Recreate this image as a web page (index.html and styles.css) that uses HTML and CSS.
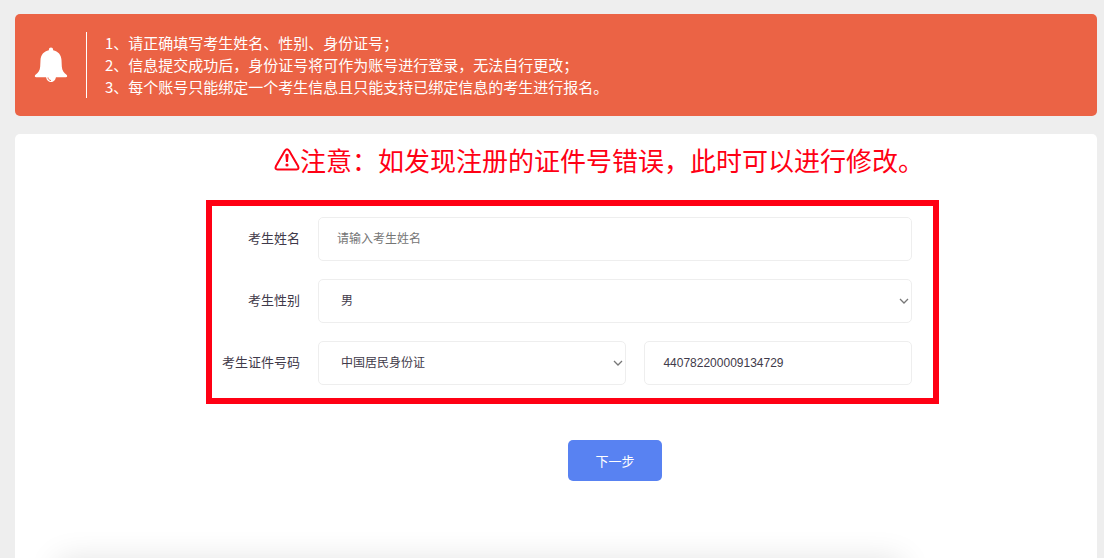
FILE: index.html
```html
<!doctype html>
<html lang="zh-CN">
<head>
<meta charset="utf-8">
<meta name="viewport" content="width=device-width, initial-scale=1">
<title>考生信息</title>
	<link rel="stylesheet" href="styles.css">
</head>

<body>
	<div class="notice">
		<div class="notice-icon">
			<svg width="34" height="36" viewBox="0 0 34 36" aria-hidden="true">
				<path fill="#fff" d="M17 0.5c1.2 0 2.1 0.9 2.1 2.1v0.6c5 1 8.2 4.7 8.4 9.8l0.3 6.500c0.2 4 2.2 6.3 4.7 8.2 1.1 0.9 0.8 2.6-0.7 2.6H2.2c-1.5 0-1.8-1.7-0.7-2.6 2.5-1.9 4.5-4.2 4.700-8.200l0.300-6.500c0.200-5.100 3.400-8.800 8.400-9.800v-0.600c0-1.200 0.900-2.100 2.100-2.100z"/>
				<path fill="#fff" d="M12 29h10c0 3.400-2 6-5 6s-5-2.600-5-6z"/>
				<path fill="none" stroke="#eb6345" d="M14 30.500c0.200 1.800 1.200 2.800 3 3"/>
			</svg>
		</div>
		<ul class="notice-list">
			<li>1、请正确填写考生姓名、性别、身份证号；</li>
			<li>2、信息提交成功后，身份证号将可作为账号进行登录，无法自行更改；</li>
			<li>3、每个账号只能绑定一个考生信息且只能支持已绑定信息的考生进行报名。</li>
		</ul>
	</div>

	<div class="card">
		<form class="form">
			<h2 class="warning">
				<svg width="26" height="24" viewBox="0 0 26 24" aria-hidden="true">
					<path fill="none" stroke="#ff0014" stroke-width="2" stroke-linejoin="round" d="M11 2.500Q13 0 15 2.500L24 18Q25.500 21.500 22.500 21.500H3.500Q0.500 21.500 2 18z"/>
					<path fill="#ff0014" d="M11.300 6.500Q13 5 14.700 6.500L14 14h-2z"/>
					<circle fill="#ff0014" cx="13" cy="17" r="1.600"/>
				</svg>
				<span>注意：如发现注册的证件号错误，此时可以进行修改。</span>
			</h2>
			<div class="fields">
				<div class="row">
					<label for="name">考生姓名</label>
					<input type="text" id="name" placeholder="请输入考生姓名">
				</div>
				<div class="row">
					<label for="gender">考生性别</label>
					<select id="gender">
						<option>男</option>
						<option>女</option>
					</select>
				</div>
				<div class="row">
					<label for="card_no">考生证件号码</label>
					<div class="group">
						<select id="card_type" aria-label="证件类型">
							<option>中国居民身份证</option>
						</select>
						<input type="text" id="card_no" value="440782200009134729">
					</div>
				</div>
			</div>
			<div class="actions">
				<button type="submit">下一步</button>
			</div>
		</form>
	</div>
</body>
</html>
```
FILE: styles.css
```css
*{box-sizing: border-box;}
body{
	background-color: #eee;
	color: #3f3a4a;
	font-family: "Liberation Sans","Noto Sans CJK SC",sans-serif;
	display: flex;
	flex-direction: column;
	gap: 18px;
	min-height: 100vh;
	margin: 0;
	padding: 14px 7px 0 15px;
}
.notice{
	background-color: #eb6345;
	border-radius: 5px;
	color: #fff;
	display: flex;
	padding: 18px 0;
}
.notice-icon{
	border-right: 1px solid #fff;
	width: 72px;
	display: flex;
	align-items: center;
	justify-content: center;
}
.notice-list{
	font-family: "Noto Sans CJK SC",sans-serif;
	font-size: 15px;
	line-height: 22px;
	list-style-type: none;
	margin: 0;
	padding: 0 18px;
}
.card{
	background-color: #fff;
	border-radius: 5px 5px 0 0;
	flex: 1;
	overflow: hidden;
	padding: 8px 0 0 33px;
	position: relative;
}
.card::after{
	content: "";
	position: absolute;
	top: 100%;
	left: 4%;
	right: 18%;
	height: 40px;
	box-shadow: 0 2px 32px rgba(0, 0, 0, 0.12);
}
.form{
	max-width: 733px;
	margin: 0 auto;
}
.warning{
	color: #ff0014;
	display: flex;
	align-items: center;
	font-family: "Noto Sans CJK SC",sans-serif;
	font-size: 26px;
	font-weight: 400;
	line-height: 36px;
	margin: 0 0 22px;
	padding-left: 68px;
	white-space: nowrap;
}
.fields{
	border: 6px solid #ff0014;
	display: grid;
	gap: 18px;
	padding: 11px 21px 13px 0;
}
.row{
	display: grid;
	grid-template-columns: 88px 1fr;
	gap: 18px;
	align-items: center;
}
.row label{
	font-family: "Noto Sans CJK SC",sans-serif;
	font-size: 13px;
	line-height: 20px;
	padding-bottom: 2px;
	text-align: right;
	white-space: nowrap;
}
.group{
	display: flex;
	align-items: center;
	gap: 18px;
}
.group select{
	flex: 8;
}
.group input{
	flex: 7;
}
input,select{
	background-color: #fff;
	border: 1px solid #eee;
	border-radius: 5px;
	color: inherit;
	font-family: inherit;
	font-size: 12px;
	width: 100%;
	min-width: 0;
	height: 44px;
	padding: 0 18px;
}
select{
	appearance: none;
	background-image: url("data:image/svg+xml,%3Csvg xmlns='http://www.w3.org/2000/svg' width='10' height='6'%3E%3Cpath d='M1 1l4 4 4-4' fill='none' stroke='%23777' stroke-width='1.3'/%3E%3C/svg%3E");
	background-position: right 2px center;
	background-repeat: no-repeat;
	padding: 0 22px;
}
input::placeholder{
	color: #757575;
}
.actions{
	margin-top: 36px;
	padding: 0 27px 0 112px;
	text-align: center;
}
button{
	background-color: #5882f2;
	color: #fff;
	border: none;
	border-radius: 5px;
	cursor: pointer;
	font-family: inherit;
	font-size: 13px;
	height: 41px;
	padding: 0 27px;
}
```
